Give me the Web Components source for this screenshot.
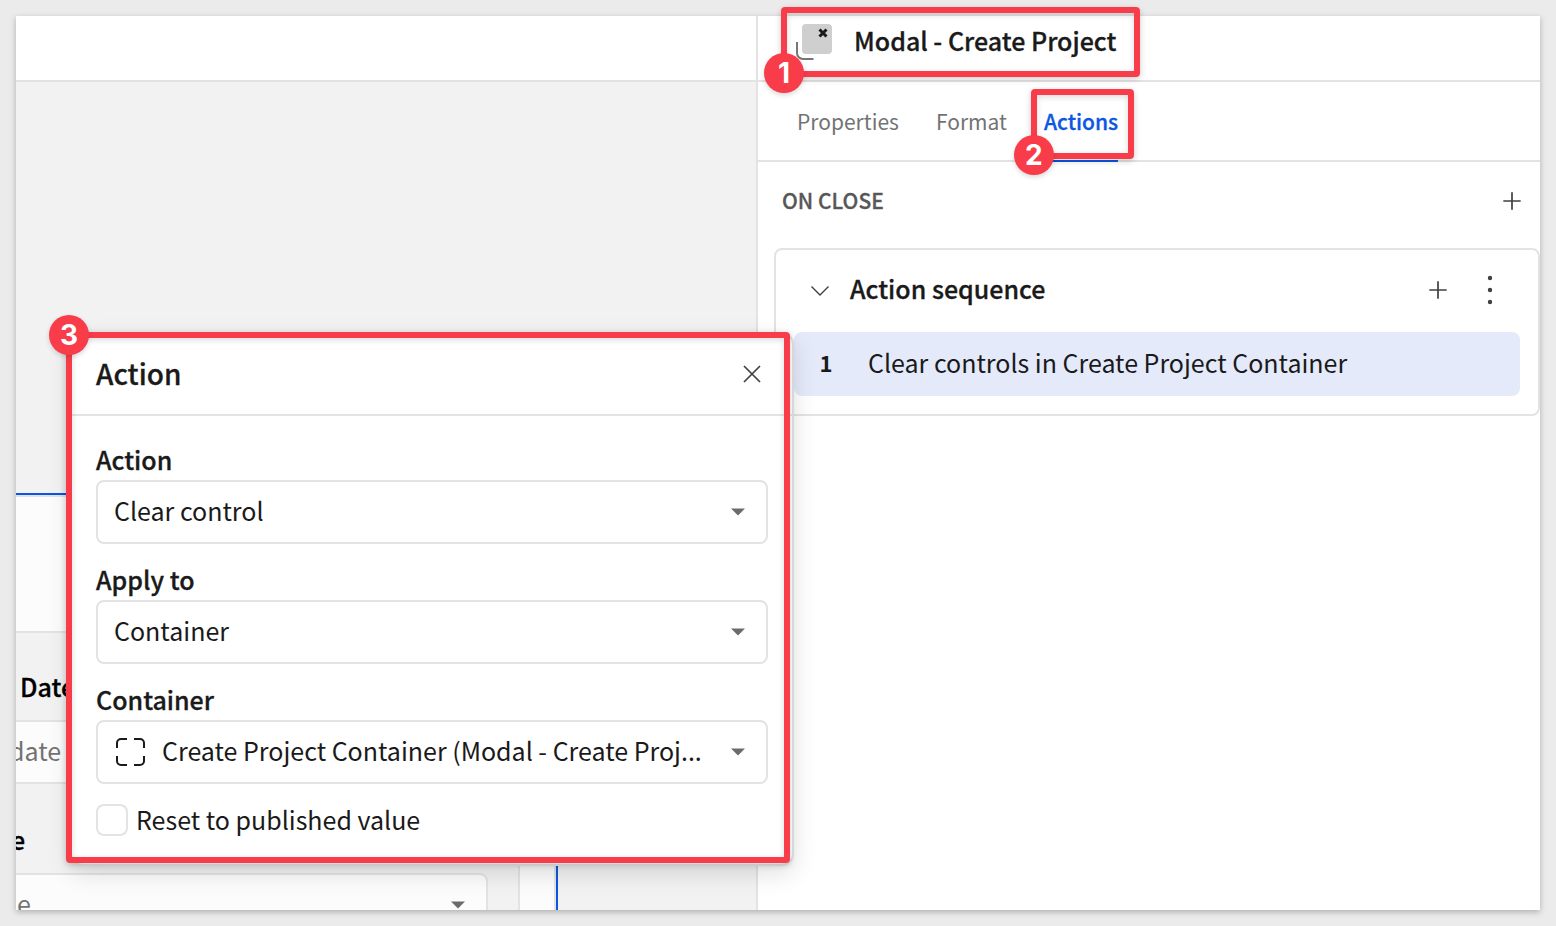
<!DOCTYPE html>
<html lang="en">
<head>
<meta charset="utf-8">
<title>Modal actions</title>
<style>
  html, body { height: 100%; }
  body {
    margin: 0;
    background: #ebebeb;
    color: #1a1a1a;
    font-family: "Noto Sans CJK KR", "Noto Sans", sans-serif;
    font-size: 25px;
    line-height: 40px;
  }
</style>
</head>
<body>
<app-frame>
  <canvas-view slot="canvas"></canvas-view>
  <side-panel slot="panel"></side-panel>
</app-frame>

<script>
const base = `
  *, *::before, *::after { box-sizing: border-box; }
  button, input, select { font: inherit; color: inherit; margin: 0; }
  button { border: 0; background: none; padding: 0; display: grid; place-items: center; cursor: pointer; }
  svg { display: block; }
`;

function define(name, html, setup) {
  const template = document.createElement('template');
  template.innerHTML = html;
  customElements.define(name, class extends HTMLElement {
    constructor() {
      super();
      this.attachShadow({ mode: 'open' }).append(template.content.cloneNode(true));
    }
    connectedCallback() {
      if (setup) setup(this, this.shadowRoot);
    }
  });
}

/* Window: canvas on the left, inspector on the right */
define('app-frame', `
  <style>${base}
    :host { display: block; min-height: 100%; height: 100%; padding: 16px; box-sizing: border-box; }
    main { display: flex; height: 100%; background: #fff; box-shadow: 0 2px 6px rgba(0,0,0,.26); }
    ::slotted([slot=canvas]) { flex: 740 1 0; min-width: 0; }
    ::slotted([slot=panel]) { flex: 782 1 0; min-width: 0; }
  </style>
  <main><slot name="canvas"></slot><slot name="panel"></slot></main>`);

/* Numbered highlight drawn round whatever it wraps */
define('mark-box', `
  <style>${base}
    :host { display: block; position: relative; }
    .ring {
      position: absolute; inset: var(--inset, -8px); z-index: 3; pointer-events: none;
      border: 6px solid #f83c49; border-radius: 4px;
      box-shadow: 0 2px 6px rgba(0,0,0,.2), inset 0 2px 6px rgba(0,0,0,.14);
    }
    .badge {
      position: absolute; left: -23px; bottom: -22px; width: 40px; height: 40px;
      display: grid; place-items: center; border-radius: 50%;
      background: #f83c49; color: #fff; box-shadow: 0 2px 5px rgba(0,0,0,.16);
      font: 700 28px/40px Inter, sans-serif;
    }
    :host([corner=top]) .badge { bottom: auto; top: -23px; }
  </style>
  <slot></slot>
  <div class="ring"><span class="badge"></span></div>`,
  (el, root) => { root.querySelector('.badge').textContent = el.getAttribute('number'); });

define('plus-button', `
  <style>${base}
    :host { display: block; }
    button { width: 40px; height: 40px; }
  </style>
  <button type="button"><svg width="18" height="18" viewBox="0 0 18 18" fill="none" stroke="#404040" stroke-width="1.7"><path d="M9 .3v17.4M.3 9h17.4"/></svg></button>`,
  (el, root) => root.querySelector('button').setAttribute('aria-label', el.getAttribute('label')));

/* Labelled drop-down */
define('select-field', `
  <style>${base}
    :host { display: block; }
    label { display: block; height: 40px; line-height: 38px; font-weight: 500; -webkit-text-stroke: .3px; }
    .box { display: grid; align-items: center; }
    .box > * { grid-area: 1 / 1; }
    select {
      appearance: none; width: 100%; height: 64px; padding: 0 48px 4px 16px;
      border: 2px solid #e3e3e3; border-radius: 8px; background: #fff;
      white-space: nowrap; overflow: hidden;
    }
    .arrow { justify-self: end; margin-right: 23px; pointer-events: none; }
    .icon { display: none; margin-left: 20px; pointer-events: none; z-index: 1; }
    :host([icon]) .icon { display: block; }
    :host([icon]) select { padding-left: 64px; }
  </style>
  <label for="s"></label>
  <div class="box">
    <select id="s"><option></option></select>
    <svg class="icon" width="30" height="30" viewBox="0 0 30 30" fill="none" stroke="#1a1a1a" stroke-width="2"><path d="M1 11V6a4 4 0 0 1 4-4h6M18 2h6a4 4 0 0 1 4 4v5M28 19v5a4 4 0 0 1-4 4h-6M11 28H5a4 4 0 0 1-4-4v-5"/></svg>
    <svg class="arrow" width="14" height="8" viewBox="0 0 14 8"><path d="M0 .5h14L7 7.5z" fill="#6b6b6b"/></svg>
  </div>`,
  (el, root) => {
    root.querySelector('label').textContent = el.getAttribute('label');
    root.querySelector('option').textContent = el.getAttribute('value');
  });

define('check-field', `
  <style>${base}
    :host { display: block; }
    label { display: flex; align-items: center; gap: 8px; height: 32px; }
    span { padding-bottom: 2px; }
    input { appearance: none; width: 32px; height: 32px; border: 2px solid #e3e3e3; border-radius: 8px; background: #fff; }
  </style>
  <label><input type="checkbox"><span><slot></slot></span></label>`);

define('action-dialog', `
  <style>${base}
    :host { display: block; border: 2px solid #e0e0e0; border-radius: 12px; background: #fff; box-shadow: 0 8px 24px rgba(0,0,0,.12); }
    header { display: flex; align-items: center; justify-content: space-between; height: 82px; padding: 0 20px 0 24px; border-bottom: 2px solid #e3e3e3; }
    h2 { margin: 0; padding-bottom: 2px; font-size: 28px; font-weight: 500; -webkit-text-stroke: .3px; }
    button { width: 40px; height: 40px; }
    form { display: grid; gap: 16px; padding: 24px 24px 28px; }
    check-field { margin-top: 4px; }
  </style>
  <header>
    <h2>Action</h2>
    <button type="button" aria-label="Close"><svg width="18" height="18" viewBox="0 0 18 18" fill="none" stroke="#404040" stroke-width="1.7"><path d="M1 1l16 16M17 1L1 17"/></svg></button>
  </header>
  <form>
    <select-field label="Action" value="Clear control"></select-field>
    <select-field label="Apply to" value="Container"></select-field>
    <select-field icon label="Container" value="Create Project Container (Modal - Create Proj..."></select-field>
    <check-field>Reset to published value</check-field>
  </form>`);

/* Sequence card with its list of actions */
define('action-sequence', `
  <style>${base}
    :host { display: block; border: 2px solid #e3e3e3; border-radius: 8px; padding: 0 18px 18px; }
    header { display: flex; align-items: center; height: 80px; margin-bottom: 2px; }
    .fold { width: 40px; height: 40px; margin: 0 10px 0 6px; }
    h3 { flex: 1; margin: 0; padding-bottom: 4px; font-size: 25px; font-weight: 500; -webkit-text-stroke: .3px; }
    .more { width: 40px; height: 40px; margin: 0 10px 0 12px; }
    ol { list-style: none; margin: 0; padding: 0; }
    li { display: flex; align-items: center; height: 64px; padding-bottom: 4px; border-radius: 8px; background: #e4eafa; }
    b { width: 64px; margin-right: 10px; text-align: center; font-size: 22px; font-weight: 700; }
  </style>
  <header>
    <button class="fold" type="button" aria-label="Collapse"><svg width="20" height="12" viewBox="0 0 20 12" fill="none" stroke="#404040" stroke-width="1.400"><path d="M1.500 2.500L10 11 18.500 2.500"/></svg></button>
    <h3>Action sequence</h3>
    <plus-button label="Add action"></plus-button>
    <button class="more" type="button" aria-label="More"><svg width="6" height="30" viewBox="0 0 6 30" fill="#404040"><circle cx="3" cy="3" r="2.200"/><circle cx="3" cy="15" r="2.200"/><circle cx="3" cy="27" r="2.200"/></svg></button>
  </header>
  <ol><li><b>1</b><span>Clear controls in Create Project Container</span></li></ol>`);

define('side-panel', `
  <style>${base}
    :host { display: block; position: relative; border-left: 2px solid #e3e3e3; background: #fff; }
    header { display: flex; align-items: flex-start; height: 66px; padding: 8px 0 0 38px; border-bottom: 2px solid #e3e3e3; }
    .one { --inset: -17px -24px -17px -15px; }
    .title { display: flex; align-items: flex-start; gap: 22px; height: 36px; }
    .title h1 { margin: 0; font-size: 25px; line-height: 32px; font-weight: 500; -webkit-text-stroke: .3px; }
    nav { display: flex; gap: 37px; height: 80px; padding-left: 39px; border-bottom: 2px solid #e3e3e3; font-size: 21px; }
    a { display: block; height: 80px; line-height: 78px; color: #737373; text-decoration: none; }
    a[aria-current] { color: #0b57e3; font-weight: 500; border-bottom: 2px solid #0b57e3; -webkit-text-stroke: .3px; }
    .two { --inset: 7px -16px 1px -13px; }
    .group { display: flex; align-items: center; justify-content: space-between; height: 78px; padding: 0 8px 0 24px; }
    h2 { margin: 0; padding-bottom: 2px; font-size: 21px; font-weight: 500; color: #575757; -webkit-text-stroke: .3px; }
    action-sequence { margin: 8px 0 0 16px; }
    .three { position: absolute; top: 316px; right: calc(100% - 36px); width: 724px; z-index: 2; --inset: 0 4px 3px -4px; }
  </style>
  <header>
    <mark-box class="one" number="1"><div class="title">
      <svg width="36" height="36" viewBox="0 0 36 36"><rect x="6" width="30" height="30" rx="4" fill="#cfcfcf"/><path d="M23.500 5.500l7 7M30.500 5.500l-7 7" stroke="#1a1a1a" stroke-width="3"/><path d="M1 18v11a6 6 0 0 0 6 6h10.500" fill="none" stroke="#777" stroke-width="2"/></svg>
      <h1>Modal - Create Project</h1>
    </div></mark-box>
  </header>
  <nav>
    <a href="#properties">Properties</a>
    <a href="#format">Format</a>
    <mark-box class="two" number="2"><a href="#actions" aria-current="page">Actions</a></mark-box>
  </nav>
  <div class="group"><h2>ON CLOSE</h2><plus-button label="Add sequence"></plus-button></div>
  <action-sequence></action-sequence>
  <mark-box class="three" number="3" corner="top"><action-dialog></action-dialog></mark-box>`);

/* Workbook canvas, scrolled so that the open modal is cut off at the left */
define('canvas-view', `
  <style>${base}
    :host { display: flex; flex-direction: column; overflow: hidden; background: #f2f2f2; }
    .bar { flex: 0 0 66px; background: #fff; border-bottom: 2px solid #e3e3e3; }
    .modal {
      flex: 0 0 auto; margin: 411px 198px 0 -16px;
      border: solid #0b57e3; border-width: 2px 2px 0 0; background: #fcfcfc;
    }
    .edge { border: solid #e3e3e3; border-width: 2px 2px 0 0; padding: 134px 34px 0 0; }
    .fields { display: grid; gap: 37px; padding: 35px 30px 40px 0; background: #f2f2f2; border: solid #e3e3e3; border-width: 2px 2px 0 0; }
    label { display: block; height: 40px; line-height: 36px; margin-bottom: 12px; color: #000; font-weight: 500; -webkit-text-stroke: .3px; }
    .box { display: grid; align-items: center; }
    .box > * { grid-area: 1 / 1; }
    input, select { appearance: none; width: 100%; height: 64px; border: 2px solid #e3e3e3; border-radius: 8px; background: #fcfcfc; color: #737373; opacity: 1; }
    input::placeholder { color: #737373; }
    .date label { padding-left: 20px; }
    .date input { padding: 0 0 4px 7px; }
    .type label { padding-left: 11px; }
    .type select { padding: 0 0 4px 15px; }
    .arrow { justify-self: end; margin-right: 23px; }
  </style>
  <div class="bar"></div>
  <section class="modal"><div class="edge"><div class="fields">
    <div class="date"><label for="d">Date</label><input id="d" placeholder="date"></div>
    <div class="type"><label for="t">e</label>
      <div class="box"><select id="t"><option>e</option></select>
      <svg class="arrow" width="14" height="8" viewBox="0 0 14 8"><path d="M0 .5h14L7 7.5z" fill="#6b6b6b"/></svg></div>
    </div>
  </div></div></section>`);
</script>
</body>
</html>
